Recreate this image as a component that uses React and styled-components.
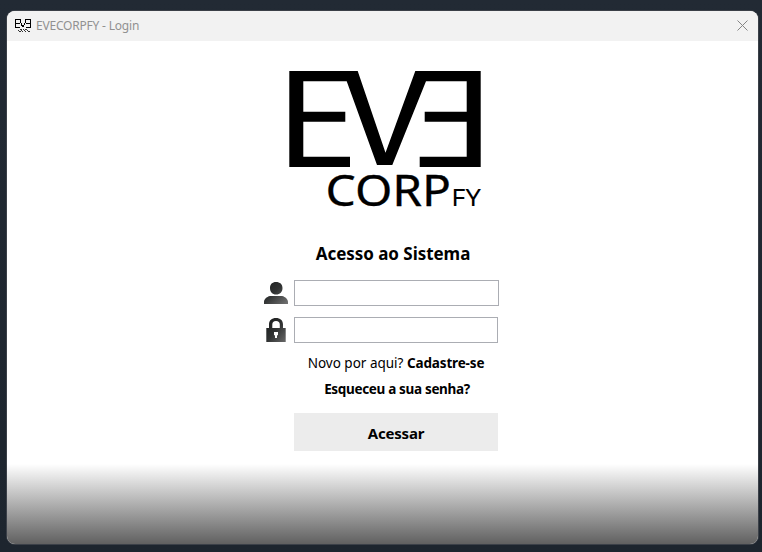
import React from 'react';
import styled, { createGlobalStyle } from 'styled-components';

const GlobalStyle = createGlobalStyle`
  * { box-sizing: border-box; }
  body {
    margin: 0;
    background: #1f2731;
    font-family: "Open Sans", "Noto Sans", sans-serif;
    color: #000;
  }
`;

const Desktop = styled.main`
  height: 552px;
  padding: 11px 4px 8px 7px;
  background: linear-gradient(#222a34, #1d252e);
`;

const Window = styled.section`
  display: flex;
  flex-direction: column;
  height: 533px;
  border-radius: 8px;
  overflow: hidden;
  background: #fff;
  box-shadow: 0 0 0 1px #3b4048;
`;

const TitleBar = styled.header`
  display: flex;
  align-items: center;
  flex: 0 0 30px;
  padding: 0 10px 0 8px;
  background: #f2f2f2;
`;

const Title = styled.h1`
  flex: 1;
  margin: 0 0 0 5px;
  font: 400 12px/16px "Noto Sans", sans-serif;
  letter-spacing: -0.2px;
  color: #919191;
`;

const CloseButton = styled.button`
  display: flex;
  margin-top: -2px;
  padding: 0;
  border: 0;
  background: none;
`;

const Content = styled.div`
  display: flex;
  flex-direction: column;
  flex: 1;
  padding: 30px 0 0 257px;
`;

const Logo = styled.svg`
  display: block;
  flex: none;
  margin-left: 25px;
  overflow: visible;
  font-family: "Noto Sans", sans-serif;
`;

const Heading = styled.h2`
  width: 204px;
  margin: 11px 0 0 27px;
  font: 700 17px/24px "Noto Sans", sans-serif;
  letter-spacing: -0.04px;
  text-align: center;
  white-space: nowrap;
`;

const Form = styled.form`
  display: flex;
  flex-direction: column;
`;

const Field = styled.label`
  display: flex;
  align-items: center;
  gap: 6px;
  height: 26px;
  margin-top: ${(p) => p.$top}px;
`;

const Input = styled.input`
  width: ${(p) => p.$width}px;
  height: 26px;
  padding: 0 6px;
  border: 1px solid #abadb3;
  border-radius: 0;
  outline: none;
  background: #fff;
`;

const Line = styled.p`
  width: 204px;
  margin: ${(p) => p.$top}px 0 0 ${(p) => p.$left}px;
  font: 400 13.5px/20px "Noto Sans", sans-serif;
  text-align: center;
  white-space: nowrap;
`;

const Strong = styled.strong`
  font-weight: 700;
  letter-spacing: ${(p) => p.$tracking}px;
`;

const Submit = styled.button`
  width: 204px;
  height: 38px;
  margin: 14px 0 0 30px;
  padding: 1px 0 0;
  border: 0;
  background: #ececec;
  color: #000;
  font: 700 15px/20px "Noto Sans", sans-serif;
  letter-spacing: -0.2px;
`;

const Fade = styled.div`
  flex: 0 0 80px;
  background: linear-gradient(#fff, #606060);
`;

const AppIcon = () => (
  <svg width="16" height="14" viewBox="0 0 16 14" shapeRendering="crispEdges">
    <path
      d="M5.5 .5H.5V8.5H5M.5 4.5H5M5.5 1V4M6.5 4V7M7.5 6V8M8.5 6V8M9.5 4V6M10.5 1V4M10 .5H15.5V8.5H11M11 4.5H15.5"
      fill="none"
      stroke="#000"
    />
    <path
      d="M5 10h2v1H5zM3 11h1v1H3zM8 10h1v1H8zM10 10h2v1h-2zM6 11h1v1H6zM9 11h1v1H9zM12 11h1v1h-1zM4 12h2v1H4zM7 12h1v1H7zM10 12h1v1h-1zM13 12h2v1h-2z"
      fill="#333"
    />
  </svg>
);

const UserIcon = () => (
  <svg width="24" height="24" viewBox="0 0 24 24">
    <defs>
      <linearGradient id="user" x2="1" y2="1">
        <stop stopColor="#1c1e1e" />
        <stop offset=".45" stopColor="#303232" />
        <stop offset="1" stopColor="#747474" />
      </linearGradient>
    </defs>
    <path
      d="M12 1C16 1 18.5 3.3 18.5 7C18.5 11 16 13.5 12.2 13.5C8.3 13.5 6 11 6 7C6 3.3 8.3 1 12 1ZM6 15H18C21.5 15.7 24 18.5 24 21V23H0V21C0 18.5 2.5 15.7 6 15Z"
      fill="url(#user)"
    />
  </svg>
);

const LockIcon = () => (
  <svg width="24" height="26" viewBox="0 0 24 26">
    <defs>
      <linearGradient id="lock" x2="1" y2="1">
        <stop stopColor="#171919" />
        <stop offset=".5" stopColor="#303232" />
        <stop offset="1" stopColor="#686868" />
      </linearGradient>
    </defs>
    <path
      d="M2.3 11H5V7.5C5 3.3 7.8 1 12 1S19 3.3 19 7.5V11H21.7V25H2.3ZM8.3 11H15.8V7.5C15.8 5.2 14.5 4 12 4S8.3 5.2 8.3 7.5Z"
      fill="url(#lock)"
      fillRule="evenodd"
    />
    <path d="M10 15H14V18L13 18.5V21H11V18.5L10 18Z" fill="#fff" />
  </svg>
);

export default function App() {
  return (
    <Desktop>
      <GlobalStyle />
      <Window>
        <TitleBar>
          <AppIcon />
          <Title>EVECORPFY - Login</Title>
          <CloseButton aria-label="Fechar">
            <svg width="11" height="11" viewBox="0 0 11 11">
              <path d="M.5.5L10.5 10.5M10.5.5L.5 10.5" stroke="#858585" />
            </svg>
          </CloseButton>
        </TitleBar>
        <Content>
          <Logo width="200" height="160" viewBox="289 71 200 160" role="img" aria-label="EVE CORP FY">
            <path d="M289.3 71H357.7L385.5 152.7L415.3 71H480.7V167H419.7V156.7H466.7V121.7H424.7V111.7H466.7V81.3H426L392.3 165H377L346.7 81.3H303.3V111.7H345.3V121.7H303.3V156.7H350V167H289.3Z" />
            <text x="325.6" y="206.3" fontSize="44" textLength="125.5" lengthAdjust="spacingAndGlyphs" stroke="#000" strokeWidth=".3">CORP</text>
            <text x="451.3" y="206" fontSize="24" textLength="29.5" lengthAdjust="spacingAndGlyphs">FY</text>
          </Logo>
          <Heading>Acesso ao Sistema</Heading>
          <Form onSubmit={(event) => event.preventDefault()}>
            <Field $top={14}>
              <UserIcon />
              <Input $width={205} aria-label="Usuário" />
            </Field>
            <Field $top={11}>
              <LockIcon />
              <Input $width={204} type="password" aria-label="Senha" />
            </Field>
            <Line $top={10} $left={30}>
              Novo por aqui? <Strong $tracking={-0.15}>Cadastre-se</Strong>
            </Line>
            <Line $top={6} $left={31}>
              <Strong $tracking={-0.33}>Esqueceu a sua senha?</Strong>
            </Line>
            <Submit>Acessar</Submit>
          </Form>
        </Content>
        <Fade />
      </Window>
    </Desktop>
  );
}
